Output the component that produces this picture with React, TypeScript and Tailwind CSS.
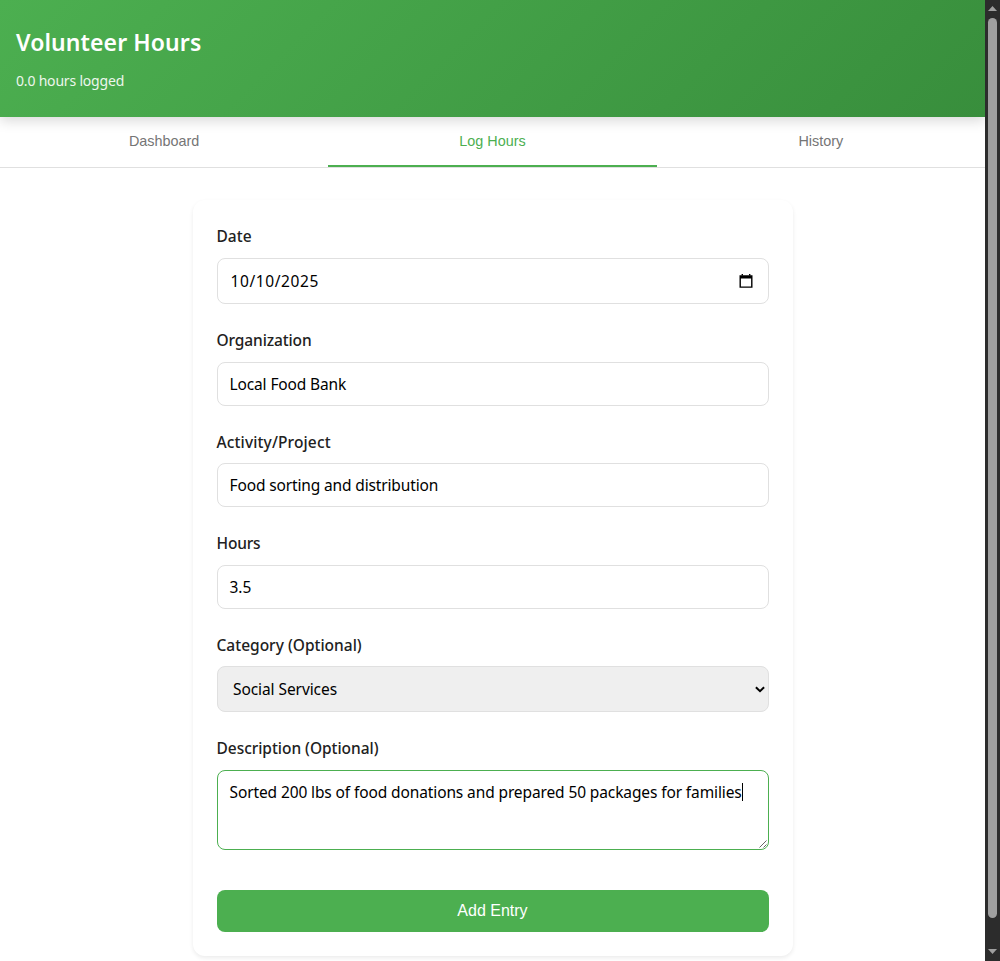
import type { ReactNode } from "react";

function Field({ label, labelClass, children }: { label: string; labelClass: string; children: ReactNode }) {
  return (
    <div className="flex flex-col gap-2">
      <div className="h-[25.6px] text-[15.5px] leading-[25.6px] font-medium text-[#212121]">
        <span className={labelClass}>{label}</span>
      </div>
      {children}
    </div>
  );
}

const box = "flex items-center rounded-lg border border-[#e0e0e0] bg-white px-3 pt-px text-[15.5px] text-black";

export default function App() {
  return (
    <div className="flex h-[961px] w-[1000px] overflow-hidden bg-white font-['Noto_Sans',sans-serif] whitespace-nowrap">
      <div className="w-[985px] shrink-0 overflow-hidden">
        <header className="relative h-[117px] bg-[linear-gradient(135deg,#4caf50_0%,#388e3c_100%)] px-4 pt-6 text-white shadow-[0_4px_12px_rgba(0,0,0,0.15)]">
          <h1 className="h-[38px] text-[23px] leading-[37px] font-semibold">
            <span className="tracking-[0.1px]">Volunteer Hours</span>
          </h1>
          <p className="mt-2 text-[14px] leading-[22px] opacity-90">
            <span className="tracking-[-0.19px]">0.0 hours logged</span>
          </p>
        </header>
        <nav className="flex h-[51px] border-b border-[#e0e0e0] font-['Liberation_Sans',sans-serif] text-[14.4px] text-[#757575]">
          <button className="flex-1 border-b-2 border-transparent pt-0.5">Dashboard</button>
          <button className="flex-1 border-b-2 border-[#4caf50] pt-0.5 text-[#4caf50]">Log Hours</button>
          <button className="flex-1 border-b-2 border-transparent pt-0.5">History</button>
        </nav>
        <main className="flex justify-center pt-8">
          <form className="flex h-[756px] w-[600px] flex-col gap-6 rounded-xl bg-white p-6 shadow-[0_2px_4px_rgba(0,0,0,0.08)]">
            <Field label="Date" labelClass="tracking-[0px]">
              <div className={`${box} h-[46.4px] justify-between pr-[15px]`}>
                <span className="ml-px pt-px tracking-[0.6px]">10/10/2025</span>
                <svg width="14" height="14" viewBox="0 0 14 14">
                  <path d="M0.5 1.3h13v12.4H0.5zM1.9 4.6v7.8h10.2V4.6z" fill="#000" fillRule="evenodd" />
                  <path d="M2.6 0h1.4v1.5H2.6zM10 0h1.4v1.5H10z" fill="#000" />
                </svg>
              </div>
            </Field>
            <Field label="Organization" labelClass="tracking-[-0.12px]">
              <div className={`${box} h-11`}><span className="pt-px tracking-[-0.13px]">Local Food Bank</span></div>
            </Field>
            <Field label="Activity/Project" labelClass="tracking-[0.13px]">
              <div className={`${box} h-11`}><span className="tracking-[-0.14px]">Food sorting and distribution</span></div>
            </Field>
            <Field label="Hours" labelClass="tracking-[-0.2px]">
              <div className={`${box} h-11`}><span className="pt-px">3.5</span></div>
            </Field>
            <Field label="Category (Optional)" labelClass="tracking-[0px]">
              <div className="flex h-[46px] items-center justify-between rounded-lg border border-[#e0e0e0] bg-[#efefef] pr-[3px] pl-[15.5px] text-[15.5px] text-black">
                <span className="tracking-[-0.08px]">Social Services</span>
                <svg width="10" height="7" viewBox="0 0 10 7" fill="none" stroke="#000" strokeWidth="2">
                  <path d="M0.9 1.2 5 5.1 9.1 1.2" />
                </svg>
              </div>
            </Field>
            <Field label="Description (Optional)" labelClass="tracking-[-0.04px]">
              <div className="relative h-20 rounded-lg border border-[#4caf50] bg-white px-3 pt-3 text-[15.5px] text-black">
                <div className="flex h-[18px] items-center">
                  <span className="pt-0.5 tracking-[-0.115px]">Sorted 200 lbs of food donations and prepared 50 packages for families</span>
                  <span className="h-[18px] w-px bg-black" />
                </div>
                <svg className="absolute right-px bottom-px" width="8" height="8" viewBox="0 0 8 8" stroke="#555" strokeWidth="0.9">
                  <path d="M0.5 7.5 7.5 0.5M4.5 7.5 7.5 4.5" />
                </svg>
              </div>
            </Field>
            <button type="button" className="mt-4 h-[42px] shrink-0 rounded-lg bg-[#4caf50] font-['Liberation_Sans',sans-serif] text-base text-white">
              Add Entry
            </button>
          </form>
        </main>
      </div>
      <div className="flex w-[15px] flex-col items-center justify-between bg-[#2c2c2c]">
        <svg width="9" height="18" viewBox="0 0 9 18"><path d="M0 11 4.5 6 9 11z" fill="#9f9f9f" /></svg>
        <div className="h-[900px] w-[9px] rounded-full bg-[#9f9f9f]" />
        <svg className="mb-px" width="9" height="42" viewBox="0 0 9 42"><path d="M0 31 4.5 36 9 31z" fill="#9f9f9f" /></svg>
      </div>
    </div>
  );
}
